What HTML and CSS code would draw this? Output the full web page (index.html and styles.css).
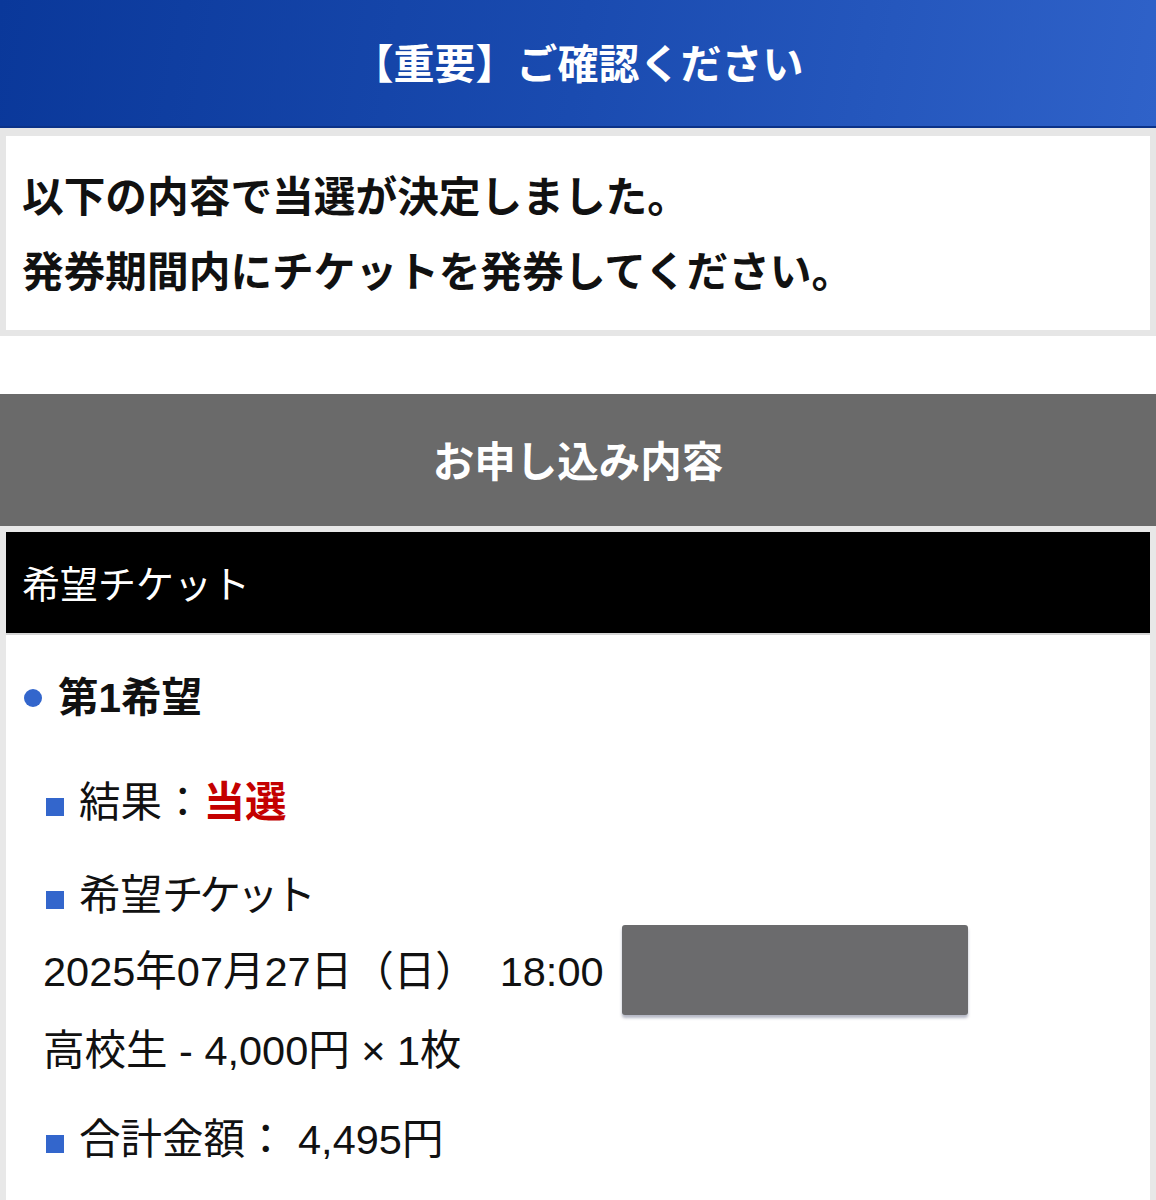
FILE: index.html
```html
<!DOCTYPE html>
<html lang="ja">
<head>
<meta charset="utf-8">
<title>ご確認ください</title>
<link rel="stylesheet" href="styles.css">
</head>
<body>
<div class="header">【重要】ご確認ください</div>
<div class="notice">
  <p class="notice-line">以下の内容で当選が決定しました。</p>
  <p class="notice-line">発券期間内にチケットを発券してください。</p>
</div>
<div class="section-title">お申し込み内容</div>
<div class="panel">
  <div class="panel-bar">希望チケット</div>
  <div class="panel-body">
    <div class="choice"><span class="dot"></span>第1希望</div>
    <div class="item result"><span class="sq"></span>結果：<span class="won">当選</span></div>
    <div class="item ticket">
      <div><span class="sq"></span>希望<span class="kana">チケット</span></div>
      <div class="sub">2025年07月27日（日）&nbsp;&nbsp;18:00<span class="mask"></span></div>
      <div class="sub">高校生 - 4,000円 × 1枚</div>
    </div>
    <div class="item total"><span class="sq"></span>合計金額： 4,495円</div>
  </div>
</div>
</body>
</html>
```

FILE: styles.css
```css
html, body {
  margin: 0;
  padding: 0;
  background: #ffffff;
}
body {
  font-family: "Noto Sans CJK JP", "Noto Sans", sans-serif;
  color: #111111;
}
.header {
  height: 126px;
  line-height: 122px;
  background: linear-gradient(100deg, #0a389a 0%, #1a4bb0 50%, #2f62c9 100%);
  border-bottom: 2px solid #0b3288;
  color: #ffffff;
  font-weight: 700;
  font-size: 41px;
  text-align: center;
}
.notice {
  border: 6px solid #e6e6e6;
  border-top-width: 8px;
  background: #ffffff;
  height: 194px;
  box-sizing: content-box;
  padding: 0 16px;
}
.notice-line {
  margin: 0;
  font-size: 41.7px;
  font-weight: 700;
  line-height: 75px;
}
.notice-line:first-child {
  margin-top: 21px;
}
.section-title {
  margin-top: 58px;
  height: 132px;
  line-height: 130px;
  background: #6a6a6a;
  color: #ffffff;
  font-size: 41.5px;
  font-weight: 700;
  text-align: center;
}
.panel {
  border: 6px solid #e8e8e8;
  border-bottom: none;
}
.panel-bar {
  background: #000000;
  color: #ffffff;
  height: 101px;
  line-height: 100px;
  font-size: 38px;
  padding-left: 16px;
  border-bottom: 2px solid #d4d4d4;
}
.panel-body {
  padding: 0 0 40px 18px;
}
.choice {
  margin-top: 33px;
  line-height: 60px;
  font-family: "Liberation Sans", "Noto Sans CJK JP", sans-serif;
  font-size: 40.5px;
  font-weight: 700;
  display: flex;
  align-items: center;
}
.dot {
  width: 18px;
  height: 18px;
  border-radius: 50%;
  background: #3366cc;
  margin-right: 16px;
}
.item {
  font-family: "Liberation Sans", "Noto Sans CJK JP", sans-serif;
  font-size: 41.5px;
  line-height: 76px;
  padding-left: 22px;
}
.result {
  margin-top: 45px;
  line-height: 60px;
}
.ticket {
  margin-top: 25px;
}
.total {
  margin-top: 13px;
}
.sq {
  display: inline-block;
  width: 18px;
  height: 18px;
  background: #3366cc;
  margin-right: 15px;
  vertical-align: 1px;
}
.kana {
  letter-spacing: -4px;
}
.won {
  color: #c40000;
  font-weight: 700;
}
.sub {
  margin-left: -3px;
}
.mask {
  display: inline-block;
  width: 346px;
  height: 90px;
  margin: -12px 0 -2px 18px;
  vertical-align: middle;
  background: #6b6b6d;
  border-radius: 3px;
  box-shadow: 0 3px 3px rgba(40, 50, 90, 0.35);
}
```
